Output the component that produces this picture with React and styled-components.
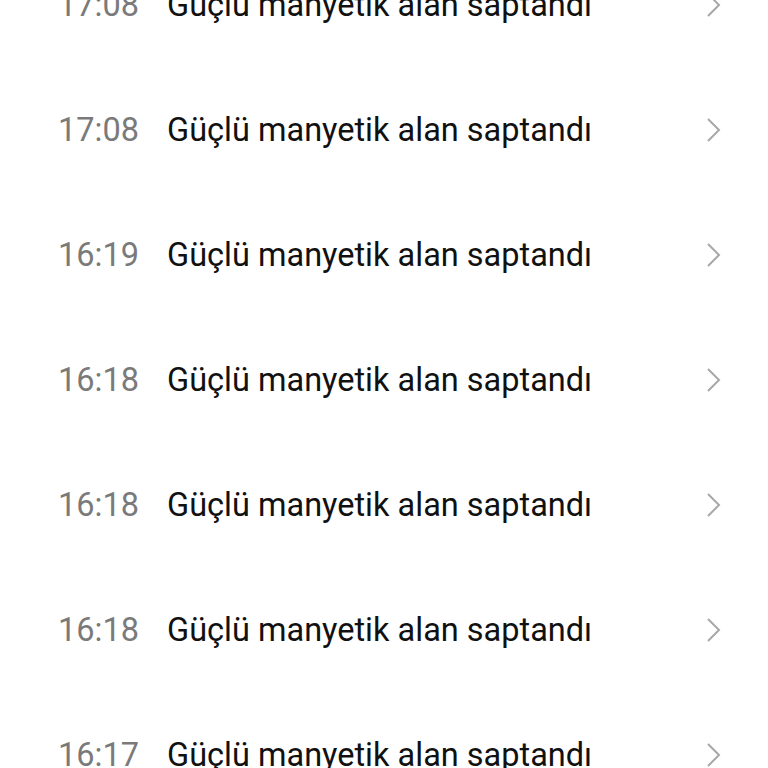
import styled, { createGlobalStyle } from 'styled-components';

const GlobalStyle = createGlobalStyle`
  html, body {
    margin: 0;
    padding: 0;
    background: #ffffff;
    overflow: hidden;
  }
`;

const List = styled.ul`
  list-style: none;
  margin: -58px 0 0 0;
  padding: 0;
  font-family: Roboto, "Noto Sans", sans-serif;
`;

const Row = styled.li`
  height: 125px;
  display: flex;
  align-items: center;
  padding: 0 46px 0 58px;
`;

const Time = styled.span`
  width: 109px;
  flex-shrink: 0;
  font-size: 32.5px;
  color: #7a7a7a;
`;

const Title = styled.span`
  flex: 1;
  font-size: 32.5px;
  color: #111111;
`;

const Chevron = styled.svg`
  width: 16px;
  height: 26px;
  flex-shrink: 0;
`;

const events = [
  '17:08', '17:08', '16:19', '16:18', '16:18', '16:18', '16:17',
];

function Arrow() {
  return (
    <Chevron viewBox="0 0 16 26">
      <path d="M2 2 L13 13 L2 24" fill="none" stroke="#a8a8a8" strokeWidth="2" />
    </Chevron>
  );
}

export default function App() {
  return (
    <>
      <GlobalStyle />
      <List>
        {events.map((time, i) => (
          <Row key={i}>
            <Time>{time}</Time>
            <Title>Güçlü manyetik alan saptandı</Title>
            <Arrow />
          </Row>
        ))}
      </List>
    </>
  );
}
